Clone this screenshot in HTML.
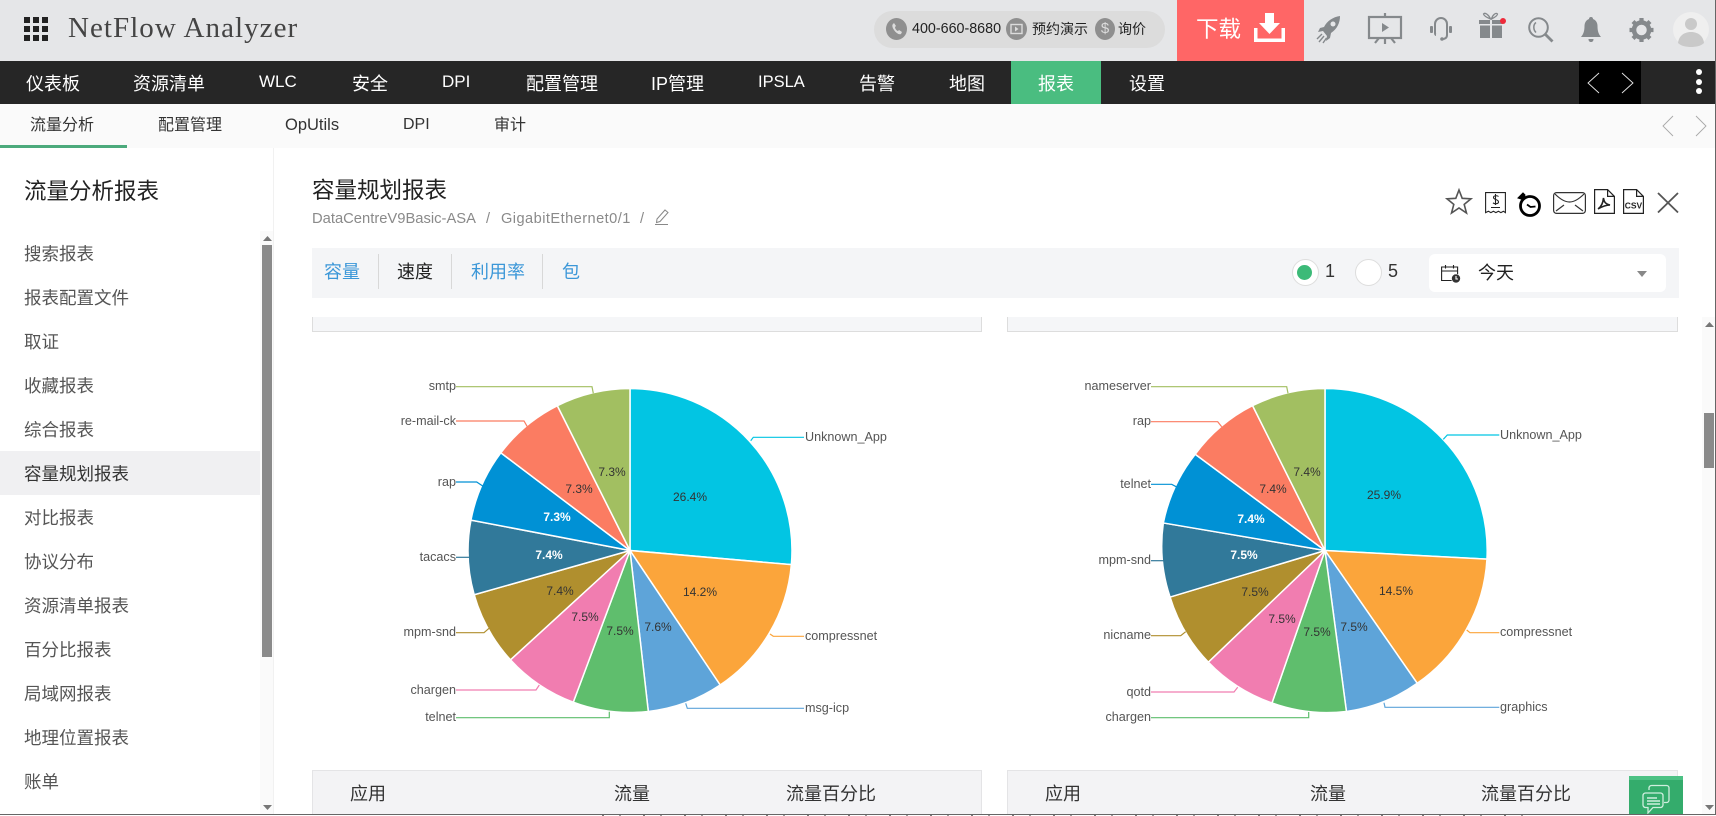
<!DOCTYPE html>
<html lang="zh">
<head>
<meta charset="utf-8">
<title>NetFlow Analyzer</title>
<style>
html,body{margin:0;padding:0;width:1716px;height:816px;overflow:hidden;background:#fff}
body{position:relative;font-family:"Liberation Sans","Noto Sans CJK SC",sans-serif;color:#333}
.a{position:absolute;white-space:nowrap}
.t{position:absolute;white-space:nowrap;line-height:24px;height:24px}
svg{position:absolute;overflow:visible}
.nav{color:#fff;font-size:18px;top:72px}
.sub{color:#333;font-size:16px;top:114px}
.side{color:#555;font-size:17.5px;left:24px}
.th{color:#333;font-size:18px;top:782px}
.tab{font-size:18px;top:260px;color:#3b97d8}
.div{position:absolute;top:254px;width:1px;height:35px;background:#d8d8d8}
.pie text{font-family:"Liberation Sans",sans-serif}
.l{font-size:12.6px;fill:#555;text-anchor:end;dominant-baseline:central}
.r{font-size:12.6px;fill:#555;dominant-baseline:central}
.v{font-size:12px;fill:#333;text-anchor:middle;dominant-baseline:central}
.w{font-size:12px;fill:#fff;font-weight:bold;text-anchor:middle;dominant-baseline:central}
</style>
</head>
<body>

<!-- header -->
<div class="a" style="left:0;top:0;width:1716px;height:61px;background:#e5e6e8"></div>
<svg style="left:24px;top:17px" width="24" height="24" viewBox="0 0 24 24" fill="#222">
<rect x="0" y="0" width="6" height="6"/><rect x="9" y="0" width="6" height="6"/><rect x="18" y="0" width="6" height="6"/>
<rect x="0" y="9" width="6" height="6"/><rect x="9" y="9" width="6" height="6"/><rect x="18" y="9" width="6" height="6"/>
<rect x="0" y="18" width="6" height="6"/><rect x="9" y="18" width="6" height="6"/><rect x="18" y="18" width="6" height="6"/>
</svg>
<div class="a" style="left:68px;top:9px;font-family:'Liberation Serif',serif;font-size:29px;line-height:38px;letter-spacing:1.05px;color:#444">NetFlow Analyzer</div>

<div class="a" style="left:874px;top:11px;width:291px;height:37px;border-radius:19px;background:#dcdcdc"></div>
<div class="a" style="left:886px;top:18px;width:21px;height:22px;border-radius:50%;background:#8f8f8f"></div>
<svg style="left:886px;top:18px" width="22" height="22" viewBox="0 0 22 22"><path d="M7 6c-1 1-1 3 1 6s5 5 7 4l1-2-3-2-1 1c-1 0-3-2-3-4l1-1-2-3z" fill="#dcdcdc"/></svg>
<div class="t" style="left:912px;top:17px;font-size:14.3px;color:#222">400-660-8680</div>
<div class="a" style="left:1006px;top:18px;width:21px;height:22px;border-radius:50%;background:#8f8f8f"></div>
<svg style="left:1006px;top:18px" width="21" height="22" viewBox="0 0 21 22"><rect x="5" y="6.5" width="11" height="9" fill="none" stroke="#dcdcdc" stroke-width="1.4"/><path d="M9 8.5l3.5 2.5L9 13.5z" fill="#dcdcdc"/></svg>
<div class="t" style="left:1032px;top:17px;font-size:14px;color:#222">预约演示</div>
<div class="a" style="left:1095px;top:18px;width:20px;height:22px;border-radius:50%;background:#8f8f8f;color:#dcdcdc;font-size:15px;line-height:22px;text-align:center">$</div>
<div class="t" style="left:1118px;top:17px;font-size:14px;color:#222">询价</div>

<div class="a" style="left:1177px;top:0;width:127px;height:61px;background:#ff6666"></div>
<div class="t" style="left:1196px;top:17px;font-size:22.5px;color:#fff;line-height:26px;height:26px">下载</div>
<svg style="left:1254px;top:13px" width="31" height="29" viewBox="0 0 31 29" fill="#fff">
<path d="M11 0h9v10h6L15.500 21 5 10h6z"/>
<path d="M0 15h3.500v10.500h24V15H31v14H0z"/>
</svg>

<!-- header icons -->
<svg style="left:1317px;top:16px" width="24" height="27" viewBox="0 0 24 27">
<path fill="#85898c" d="M23 0C16 1 10 5 7 11L3 12 1 16l5-1 4 5-1 5 4-3 1-5C20 13 23 7 23 0z"/>
<circle cx="16" cy="8" r="2.500" fill="#e5e6e8"/>
<path d="M5 18L0 23M7 20L2 26M9.500 22L6 27" stroke="#85898c" stroke-width="1.400" fill="none"/>
</svg>
<svg style="left:1368px;top:13px" width="34" height="31" viewBox="0 0 34 31" fill="none" stroke="#85898c" stroke-width="2.200">
<rect x="1" y="4" width="32" height="21"/>
<path d="M17 0v4M17 25v6M11 25l-4 5M23 25l4 5"/>
<path d="M14 10l7 4.500-7 4.500z" fill="#85898c" stroke="none"/>
</svg>
<svg style="left:1429px;top:17px" width="24" height="25" viewBox="0 0 24 25" fill="none" stroke="#85898c" stroke-width="2">
<path d="M6 8V7a6 6 0 0 1 12 0v11c0 3-2 4-5 4"/>
<rect x="1" y="9" width="3" height="7" rx="1" fill="#85898c" stroke="none"/>
<rect x="20" y="9" width="3" height="7" rx="1" fill="#85898c" stroke="none"/>
<path d="M6 8v8c0 1 .5 2 1 2"/>
<circle cx="13" cy="22" r="1.800" fill="#85898c" stroke="none"/>
</svg>
<svg style="left:1479px;top:12px" width="26" height="27" viewBox="0 0 26 27">
<path d="M0 8h11v4H0zM13 8h11v4H13zM1 13.500h10V26H1zM13 13.500h10V26H13z" fill="#85898c"/>
<path d="M11.500 7C9 6 5 4 4.500 2 6 0 10 3 11.500 7zM12.500 7c2-1 6-3 6-5-1.500-2-5 1-6 5z" fill="none" stroke="#85898c" stroke-width="1.300"/>
<circle cx="24" cy="9" r="3" fill="#ee2a3a"/>
</svg>
<svg style="left:1528px;top:17px" width="26" height="26" viewBox="0 0 26 26" fill="none" stroke="#85898c">
<circle cx="10.500" cy="10.500" r="9.300" stroke-width="2"/>
<path d="M8 5.500c-2.800 2-3 7 0 10" stroke-width="1.500"/>
<path d="M17 17l7.500 7.500" stroke-width="2.800"/>
</svg>
<svg style="left:1581px;top:17px" width="20" height="25" viewBox="0 0 20 25" fill="#85898c">
<path d="M10 0c1.500 0 2 1 2 2 3 1 4.500 4 4.500 7 0 5 1 8 3.500 11H0c2.500-3 3.500-6 3.500-11 0-3 1.500-6 4.500-7 0-1 .5-2 2-2z"/>
<path d="M7.500 22h5c0 2-1 3-2.500 3s-2.500-1-2.500-3z"/>
</svg>
<svg style="left:1629px;top:18px" width="25" height="24" viewBox="0 0 25 24">
<circle cx="12.500" cy="12" r="7.500" fill="none" stroke="#85898c" stroke-width="4.500"/>
<g stroke="#85898c" stroke-width="4.200"><path d="M12.500 0v4M12.500 20v4M.500 12h4M20.500 12h4M4 3.500l3 3M18 17.500l3 3M21 3.500l-3 3M7 17.500l-3 3"/></g>
</svg>
<div class="a" style="left:1673px;top:12px;width:36px;height:35px;border-radius:50%;background:#efefef;overflow:hidden"></div>
<svg style="left:1673px;top:12px" width="36" height="35" viewBox="0 0 36 35" fill="#c9c9c9"><circle cx="18" cy="12" r="6"/><path d="M5 31c1-8 7-11 13-11s12 3 13 11c-3 3-8 4-13 4s-10-1-13-4z"/></svg>

<!-- nav -->
<div class="a" style="left:0;top:61px;width:1716px;height:43px;background:#262626"></div>
<div class="a" style="left:1011px;top:61px;width:90px;height:43px;background:#4abd80"></div>
<div class="a" style="left:1579px;top:61px;width:62px;height:43px;background:#000"></div>
<div class="t nav" style="left:26px">仪表板</div>
<div class="t nav" style="left:133px">资源清单</div>
<div class="t nav" style="left:259px;top:70px;font-size:17px">WLC</div>
<div class="t nav" style="left:352px">安全</div>
<div class="t nav" style="left:442px;top:70px;font-size:17px">DPI</div>
<div class="t nav" style="left:526px">配置管理</div>
<div class="t nav" style="left:651px">IP管理</div>
<div class="t nav" style="left:758px;top:70px;font-size:16.5px">IPSLA</div>
<div class="t nav" style="left:859px">告警</div>
<div class="t nav" style="left:949px">地图</div>
<div class="t nav" style="left:1038px">报表</div>
<div class="t nav" style="left:1129px">设置</div>
<svg style="left:1586px;top:73px" width="50" height="20" viewBox="0 0 50 20" fill="none" stroke="#e8e8e8" stroke-width=".9"><path d="M13 0L2 10l11 10M36 0l11 10-11 10"/></svg>
<div class="a" style="left:1696px;top:69px;width:6px;height:6px;border-radius:50%;background:#fff"></div>
<div class="a" style="left:1696px;top:79px;width:6px;height:6px;border-radius:50%;background:#fff"></div>
<div class="a" style="left:1696px;top:88px;width:6px;height:6px;border-radius:50%;background:#fff"></div>

<!-- sub nav -->
<div class="a" style="left:0;top:104px;width:1716px;height:44px;background:#fafafa;border-bottom:0"></div>
<div class="a" style="left:0;top:145px;width:127px;height:3px;background:#4caa7c"></div>
<div class="t sub" style="left:30px">流量分析</div>
<div class="t sub" style="left:158px">配置管理</div>
<div class="t sub" style="left:285px;top:113px;font-size:16.5px">OpUtils</div>
<div class="t sub" style="left:403px;top:113px">DPI</div>
<div class="t sub" style="left:494px">审计</div>
<svg style="left:1662px;top:116px" width="46" height="20" viewBox="0 0 46 20" fill="none" stroke="#a8a8a8" stroke-width=".9"><path d="M11 0L1 10l10 10M34 0l10 10-10 10"/></svg>

<!-- sidebar -->
<div class="a" style="left:273px;top:148px;width:1px;height:666px;background:#f1f1f1"></div>
<div class="t" style="left:24px;top:179px;font-size:22.500px;color:#222;line-height:26px;height:26px">流量分析报表</div>
<div class="a" style="left:0;top:451px;width:260px;height:44px;background:#f0f0f2"></div>
<div class="t side" style="top:242px">搜索报表</div>
<div class="t side" style="top:286px">报表配置文件</div>
<div class="t side" style="top:330px">取证</div>
<div class="t side" style="top:374px">收藏报表</div>
<div class="t side" style="top:418px">综合报表</div>
<div class="t side" style="top:462px;color:#333">容量规划报表</div>
<div class="t side" style="top:506px">对比报表</div>
<div class="t side" style="top:550px">协议分布</div>
<div class="t side" style="top:594px">资源清单报表</div>
<div class="t side" style="top:638px">百分比报表</div>
<div class="t side" style="top:682px">局域网报表</div>
<div class="t side" style="top:726px">地理位置报表</div>
<div class="t side" style="top:770px">账单</div>
<div class="a" style="left:260px;top:231px;width:13px;height:583px;background:#fafafa"></div>
<div class="a" style="left:262px;top:245px;width:10px;height:412px;background:#8a8a8a"></div>
<svg style="left:263px;top:236px" width="9" height="5" viewBox="0 0 9 5"><path d="M4.500 0L9 5H0z" fill="#777"/></svg>
<svg style="left:263px;top:805px" width="9" height="5" viewBox="0 0 9 5"><path d="M0 0h9L4.500 5z" fill="#777"/></svg>

<!-- main title -->
<div class="t" style="left:312px;top:178px;font-size:22.500px;color:#222;line-height:26px;height:26px">容量规划报表</div>
<div class="t" style="left:312px;top:207px;font-size:14.750px;color:#8a8a8a">DataCentreV9Basic-ASA</div>
<div class="t" style="left:486px;top:207px;font-size:14.600px;color:#8a8a8a">/</div>
<div class="t" style="left:501px;top:207px;font-size:14.600px;letter-spacing:.45px;color:#8a8a8a">GigabitEthernet0/1</div>
<div class="t" style="left:640px;top:207px;font-size:14.600px;color:#8a8a8a">/</div>
<svg style="left:654px;top:209px" width="15" height="16" viewBox="0 0 15 16" fill="none" stroke="#888" stroke-width="1"><path d="M3 10L11 1l3 2.500-8 9-3.500 1zM1 15.500h13"/></svg>

<!-- action icons -->
<svg style="left:1446px;top:188px" width="26" height="27" viewBox="0 0 26 27" fill="none" stroke="#555" stroke-width="1.600"><path d="M13 2l3.200 8.300 8.800.5-6.800 5.600 2.300 8.600L13 20l-7.500 5 2.300-8.600L1 10.800l8.800-.5z"/></svg>
<svg style="left:1485px;top:192px" width="21" height="23" viewBox="0 0 21 23" fill="none" stroke="#222" stroke-width="1.100">
<path d="M.6.600h19.800v20l-2-1.300-2.500 1.300-2.500-1.300-2.500 1.300-2.500-1.300-2.500 1.300-2.500-1.300-2.800 1.300z"/>
<path d="M13.500 4.500c-1-1-5-1.300-5 1 0 2.500 5 1.500 5 4.500 0 2-4 2.300-5.500 .8M10.500 2v11M6 15.500h9"/>
</svg>
<svg style="left:1517px;top:192px" width="25" height="25" viewBox="0 0 25 25" fill="none" stroke="#000" stroke-width="2.800">
<circle cx="13" cy="14" r="9.500"/><path d="M10 12.500l3.500 2.500 5-.5" stroke-width="1.800"/><path d="M1 6l5-5 2 2-1 3-3 1z" fill="#000" stroke-width="1"/>
</svg>
<svg style="left:1553px;top:192px" width="33" height="22" viewBox="0 0 33 22" fill="none" stroke="#333" stroke-width="1.200">
<rect x=".6" y=".6" width="31.800" height="20.800" rx="3"/><path d="M2 2c5 5 10 8 14.500 8S26 7 31 2M3 19l8-6M30 19l-8-6"/>
</svg>
<svg style="left:1594px;top:189px" width="21" height="25" viewBox="0 0 21 25" fill="none" stroke="#222" stroke-width="1.200">
<path d="M.6.600h13l6.800 6.800v17H.6zM13.600.600v6.800h6.800"/>
<path d="M4 20c3-2 5-6 5.500-11 .5 4 2 6 6.500 7-4 0-7 1-12 4z" stroke-width="1.600"/>
</svg>
<svg style="left:1623px;top:189px" width="21" height="25" viewBox="0 0 21 25" fill="none" stroke="#222" stroke-width="1.200">
<path d="M.6.600h13l6.800 6.800v17H.6zM13.600.600v6.800h6.800"/>
<text x="10.500" y="19.500" text-anchor="middle" font-size="8.500" font-weight="bold" fill="#222" stroke="none" font-family="Liberation Sans,sans-serif">CSV</text>
</svg>
<svg style="left:1657px;top:193px" width="22" height="20" viewBox="0 0 22 20" fill="none" stroke="#555" stroke-width="1.800"><path d="M1 0l20 19.500M21 0L1 19.500"/></svg>

<!-- toolbar -->
<div class="a" style="left:312px;top:248px;width:1367px;height:50px;background:#f4f5f7"></div>
<div class="t tab" style="left:324px">容量</div>
<div class="div" style="left:378px"></div>
<div class="t tab" style="left:397px;color:#222">速度</div>
<div class="div" style="left:451px"></div>
<div class="t tab" style="left:471px">利用率</div>
<div class="div" style="left:542px"></div>
<div class="t tab" style="left:562px">包</div>
<div class="a" style="left:1292px;top:259px;width:25px;height:25px;border:1px solid #ddd;border-radius:50%;background:#fff"></div>
<div class="a" style="left:1297px;top:265px;width:15px;height:15px;border-radius:50%;background:#3cba78"></div>
<div class="t" style="left:1325px;top:259px;font-size:18px;color:#333">1</div>
<div class="a" style="left:1355px;top:259px;width:25px;height:25px;border:1px solid #ddd;border-radius:50%;background:#fff"></div>
<div class="t" style="left:1388px;top:259px;font-size:18px;color:#333">5</div>
<div class="a" style="left:1429px;top:254px;width:237px;height:38px;background:#fff;border-radius:6px"></div>
<svg style="left:1441px;top:265px" width="21" height="19" viewBox="0 0 21 19" fill="none" stroke="#222" stroke-width="1.100">
<path d="M11 15.500H.6V2h16v8M.6 6h16M4.500 0v3.500M12.500 0v3.500"/><circle cx="15" cy="13.500" r="4.500" fill="#333" stroke="#fff" stroke-width=".6"/><path d="M15 11v3h2" stroke="#fff"/>
</svg>
<div class="t" style="left:1478px;top:261px;font-size:18px;color:#222">今天</div>
<svg style="left:1637px;top:271px" width="10" height="6" viewBox="0 0 10 6"><path d="M0 0h10L5 6z" fill="#888"/></svg>

<!-- panels -->
<div class="a" style="left:312px;top:317px;width:668px;height:14px;background:#f5f6f8;border:1px solid #ddd;border-top:0"></div>
<div class="a" style="left:1007px;top:317px;width:669px;height:14px;background:#f5f6f8;border:1px solid #ddd;border-top:0"></div>

<!-- pies -->
<svg class="pie" style="left:0;top:0" width="1716" height="816" viewBox="0 0 1716 816">
<g stroke="#fff" stroke-width="1.500" stroke-linejoin="round" transform="translate(630 550.500) scale(1.006) translate(-630 -550.700)">
<path fill="#02c5e3" d="M630 550.700V389.700A161 161 0 0 1 790.400 564.800Z"/>
<path fill="#fba53b" d="M630 550.700L790.400 564.800A161 161 0 0 1 719.600 684.400Z"/>
<path fill="#5ea4d9" d="M630 550.700L719.600 684.400A161 161 0 0 1 648.200 710.700Z"/>
<path fill="#5fbe6d" d="M630 550.700L648.200 710.700A161 161 0 0 1 573.600 701.500Z"/>
<path fill="#f17db0" d="M630 550.700L573.600 701.500A161 161 0 0 1 511.200 659.400Z"/>
<path fill="#b08f2e" d="M630 550.700L511.200 659.400A161 161 0 0 1 475.100 594.700Z"/>
<path fill="#31799a" d="M630 550.700L475.100 594.700A161 161 0 0 1 471.900 520.500Z"/>
<path fill="#0091d5" d="M630 550.700L471.900 520.500A161 161 0 0 1 501.600 453.600Z"/>
<path fill="#fb7c62" d="M630 550.700L501.600 453.600A161 161 0 0 1 557.800 406.800Z"/>
<path fill="#a2bf61" d="M630 550.700L557.800 406.800A161 161 0 0 1 630 389.700Z"/>
</g>
<g fill="none" stroke-width="1.200">
<path stroke="#02c5e3" d="M750.700 440.700L753.300 437.300H804"/>
<path stroke="#fba53b" d="M770 634L773.300 636.300H804"/>
<path stroke="#5ea4d9" d="M685.700 703.300L687.300 708.300H804"/>
<path stroke="#5fbe6d" d="M609.300 711.700V717.700H456"/>
<path stroke="#f17db0" d="M539.300 685L536 690H456"/>
<path stroke="#b08f2e" d="M489 628.300L484 632.700H456"/>
<path stroke="#31799a" d="M469 557.300H456"/>
<path stroke="#0091d5" d="M482.700 486L476.700 482H456"/>
<path stroke="#fb7c62" d="M527.300 426.700L524 421H456"/>
<path stroke="#a2bf61" d="M593.300 393.300L592 386.700H456"/>
</g>
<text class="r" x="805" y="437">Unknown_App</text>
<text class="r" x="805" y="636">compressnet</text>
<text class="r" x="805" y="708">msg-icp</text>
<text class="l" x="456" y="717">telnet</text>
<text class="l" x="456" y="690">chargen</text>
<text class="l" x="456" y="632">mpm-snd</text>
<text class="l" x="456" y="557">tacacs</text>
<text class="l" x="456" y="482">rap</text>
<text class="l" x="456" y="421">re-mail-ck</text>
<text class="l" x="456" y="386">smtp</text>
<text class="v" x="690" y="497">26.4%</text>
<text class="v" x="700" y="592">14.2%</text>
<text class="v" x="658" y="627">7.6%</text>
<text class="v" x="620" y="631">7.5%</text>
<text class="v" x="585" y="617">7.5%</text>
<text class="v" x="560" y="591">7.4%</text>
<text class="w" x="549" y="555">7.4%</text>
<text class="w" x="557" y="517">7.3%</text>
<text class="v" x="579" y="489">7.3%</text>
<text class="v" x="612" y="472">7.3%</text>

<g stroke="#fff" stroke-width="1.500" stroke-linejoin="round" transform="translate(1325 550.500) scale(1.006) translate(-1325 -550.700)">
<path fill="#02c5e3" d="M1325 550.700V389.700A161 161 0 0 1 1486 559.300Z"/>
<path fill="#fba53b" d="M1325 550.700L1486 559.300A161 161 0 0 1 1416.700 682.700Z"/>
<path fill="#5ea4d9" d="M1325 550.700L1416.700 682.700A161 161 0 0 1 1346.300 710.700Z"/>
<path fill="#5fbe6d" d="M1325 550.700L1346.300 710.700A161 161 0 0 1 1272.300 702.300Z"/>
<path fill="#f17db0" d="M1325 550.700L1272.300 702.300A161 161 0 0 1 1209 661.700Z"/>
<path fill="#b08f2e" d="M1325 550.700L1209 661.700A161 161 0 0 1 1171 597Z"/>
<path fill="#31799a" d="M1325 550.700L1171 597A161 161 0 0 1 1164.300 523.300Z"/>
<path fill="#0091d5" d="M1325 550.700L1164.300 523.300A161 161 0 0 1 1196 455Z"/>
<path fill="#fb7c62" d="M1325 550.700L1196 455A161 161 0 0 1 1253 406.700Z"/>
<path fill="#a2bf61" d="M1325 550.700L1253 406.700A161 161 0 0 1 1325 389.700Z"/>
</g>
<g fill="none" stroke-width="1.200">
<path stroke="#02c5e3" d="M1443.300 439.300L1447.300 435H1499.300"/>
<path stroke="#fba53b" d="M1466.700 630L1470 632.700H1499.300"/>
<path stroke="#5ea4d9" d="M1384 702.700L1385 707.300H1499.300"/>
<path stroke="#5fbe6d" d="M1308.700 712V717.700H1151"/>
<path stroke="#f17db0" d="M1237.700 687.300L1234 692H1151"/>
<path stroke="#b08f2e" d="M1185.700 631.700L1180.700 635.700H1151"/>
<path stroke="#31799a" d="M1163.700 560.700H1151"/>
<path stroke="#0091d5" d="M1177.300 487.300L1171.700 484.300H1151"/>
<path stroke="#fb7c62" d="M1221.700 426.700L1217.700 421.700H1151"/>
<path stroke="#a2bf61" d="M1288 393.300L1286.700 386.700H1151"/>
</g>
<text class="r" x="1500" y="435">Unknown_App</text>
<text class="r" x="1500" y="632">compressnet</text>
<text class="r" x="1500" y="707">graphics</text>
<text class="l" x="1151" y="717">chargen</text>
<text class="l" x="1151" y="692">qotd</text>
<text class="l" x="1151" y="635">nicname</text>
<text class="l" x="1151" y="560">mpm-snd</text>
<text class="l" x="1151" y="484">telnet</text>
<text class="l" x="1151" y="421">rap</text>
<text class="l" x="1151" y="386">nameserver</text>
<text class="v" x="1384" y="495">25.9%</text>
<text class="v" x="1396" y="591">14.5%</text>
<text class="v" x="1354" y="627">7.5%</text>
<text class="v" x="1317" y="632">7.5%</text>
<text class="v" x="1282" y="619">7.5%</text>
<text class="v" x="1255" y="592">7.5%</text>
<text class="w" x="1244" y="555">7.5%</text>
<text class="w" x="1251" y="519">7.4%</text>
<text class="v" x="1273" y="489">7.4%</text>
<text class="v" x="1307" y="472">7.4%</text>
</svg>

<!-- table headers -->
<div class="a" style="left:312px;top:770px;width:670px;height:44px;background:#f3f3f5;border:1px solid #e4e4e6;border-bottom:0;box-sizing:border-box"></div>
<div class="a" style="left:1007px;top:770px;width:671px;height:44px;background:#f3f3f5;border:1px solid #e4e4e6;border-bottom:0;box-sizing:border-box"></div>
<div class="t th" style="left:350px">应用</div>
<div class="t th" style="left:614px">流量</div>
<div class="t th" style="left:786px">流量百分比</div>
<div class="t th" style="left:1045px">应用</div>
<div class="t th" style="left:1310px">流量</div>
<div class="t th" style="left:1481px">流量百分比</div>

<!-- chat -->
<div class="a" style="left:1629px;top:776px;width:54px;height:38px;background:#34ac6c;border-top:4px solid #4cc184;box-sizing:border-box"></div>
<svg style="left:1642px;top:785px" width="28" height="29" viewBox="0 0 28 29" fill="none" stroke="#cfeede" stroke-width="1.300">
<path d="M7 5V3a2.500 2.500 0 0 1 2.500-2.500h15A2.500 2.500 0 0 1 27 3v12a2.500 2.500 0 0 1-2.500 2.500H22"/>
<path d="M3.500 8h15A2.500 2.500 0 0 1 21 10.500V20a2.500 2.500 0 0 1-2.500 2.500H11L6 28v-5.500H3.500A2.500 2.500 0 0 1 1 20v-9.500A2.500 2.500 0 0 1 3.500 8z"/>
<path d="M5 13h10M5 16h13M5 19h13" stroke-width="1.500"/>
</svg>

<!-- right scrollbar -->
<div class="a" style="left:1702px;top:317px;width:13px;height:497px;background:#fafafa"></div>
<div class="a" style="left:1704px;top:413px;width:10px;height:55px;background:#8a8a8a"></div>
<svg style="left:1705px;top:322px" width="9" height="5" viewBox="0 0 9 5"><path d="M4.500 0L9 5H0z" fill="#777"/></svg>
<svg style="left:1705px;top:805px" width="9" height="5" viewBox="0 0 9 5"><path d="M0 0h9L4.500 5z" fill="#777"/></svg>
<div class="a" style="left:1715px;top:0;width:1px;height:815px;background:#666"></div>
<div class="a" style="left:0;top:814px;width:1716px;height:1px;background:#666"></div>
<div class="a" style="left:602px;top:815px;width:930px;height:1px;background:repeating-linear-gradient(90deg,#777 0 2px,transparent 2px 17px,#999 17px 19px,transparent 19px 41px)"></div>

</body>
</html>
